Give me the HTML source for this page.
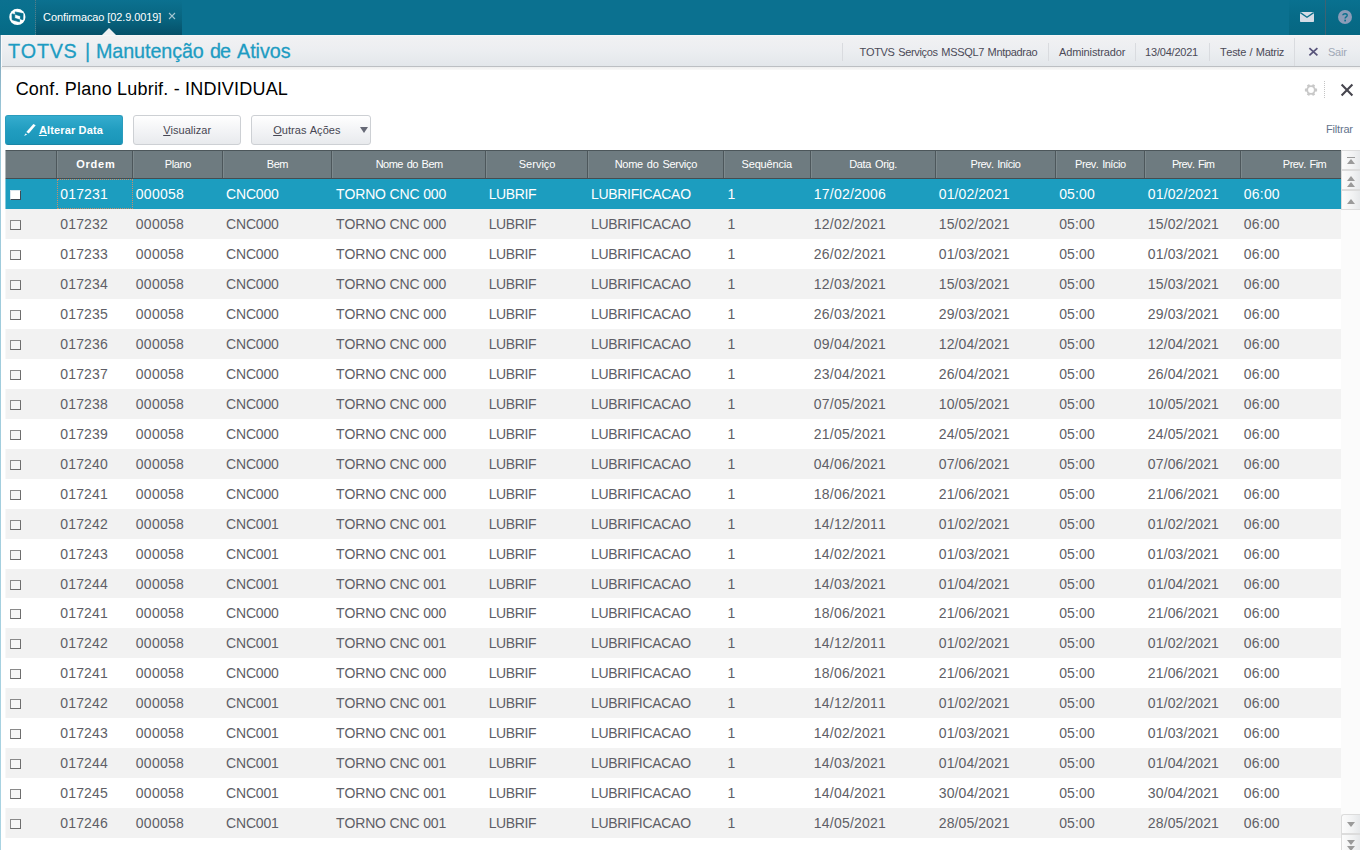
<!DOCTYPE html>
<html lang="pt-BR">
<head>
<meta charset="utf-8">
<title>TOTVS | Manutenção de Ativos</title>
<style>
*{box-sizing:border-box;margin:0;padding:0}
html,body{width:1360px;height:850px;overflow:hidden;background:#fff}
body{position:relative;font-family:"Liberation Sans",sans-serif;font-size:11px;color:#4a4a55;font-kerning:none}
.abs{position:absolute}
span,i,b,div,svg{position:absolute;white-space:nowrap;font-style:normal}
/* ---------- top bar ---------- */
#topbar{left:0;top:0;width:1360px;height:35px;background:#0b7190}
#logobg{left:0;top:0;width:35px;height:35px;background:linear-gradient(#0b7190,#08708d 40%,#066985)}
#logo{left:8px;top:8px;width:19px;height:19px}
#tabsep{left:35px;top:0;width:1px;height:35px;background:repeating-linear-gradient(#4f7f8c 0 1px,#1a6f88 1px 2px)}
#tab{left:36px;top:0;width:146px;height:35px;background:linear-gradient(#0b7190,#08647f 55%,#055069)}
#tabtxt{left:43px;top:11px;font-size:11px;line-height:13px;color:#fff;letter-spacing:-0.02px}
#tabx{left:168px;top:12px;width:8px;height:8px}
#notch{left:102px;top:28px;width:0;height:0;border-left:7px solid transparent;border-right:7px solid transparent;border-bottom:7px solid #eef0f3}
#rpanel{left:1289px;top:0;width:71px;height:35px;background:linear-gradient(#097190,#076b88 45%,#066782)}
#rdiv{left:1325px;top:0;width:1px;height:35px;background:#3d6373}
#mail{left:1300px;top:12px;width:14px;height:10px}
#help{left:1338px;top:10px;width:14px;height:14px}
/* ---------- header ---------- */
#hdr{left:0;top:35px;width:1360px;height:31px;background:linear-gradient(#fbfbfb 0,#f1f1f3 1px,#eceef1 50%,#e3e7eb)}
#hdrline{left:0;top:66px;width:1360px;height:1px;background:#bcbfc3}
#hdrshadow{left:0;top:67px;width:1360px;height:3px;background:linear-gradient(#eeeeee,#f9f9f9)}
#ledge{left:0;top:35px;width:1px;height:815px;background:linear-gradient(#7b9fb4,#9cc9da 80px,#a9d3e2)}
#ledge2{left:1px;top:35px;width:1px;height:32px;background:#fafbfc}
.title{top:39px;font-size:21px;line-height:24px;color:#1d9cc2;-webkit-text-stroke:0.3px #1d9cc2;transform:scaleX(.94);transform-origin:0 0}
.hsep{top:43px;width:1px;height:18px;background:#d9dbdf}
.hitem{top:46px;font-size:11px;line-height:13px;color:#4b4a57;word-spacing:0.8px}
/* ---------- section ---------- */
#sect{left:15px;top:79px;font-size:18px;line-height:21px;color:#000}
#gear{left:1304px;top:83px;width:14px;height:14px}
#dotsep{left:1324px;top:81px;width:1px;height:18px;background:repeating-linear-gradient(#c4c4c4 0 1px,#fff 1px 2px)}
#closex{left:1340px;top:83px;width:14px;height:14px}
/* ---------- buttons ---------- */
.btn{top:115px;height:30px;border-radius:3px;font-size:11px;line-height:13px}
#b1{left:5px;width:118px;background:linear-gradient(#35acce,#219dc0 50%,#1a95b8);border:1px solid #2a9cbd;border-bottom-color:#1a86a6}
#b1 span{left:34px;top:8px;color:#fff;font-weight:bold}
#pencil{left:23px;top:123px;width:14px;height:14px}
.btn2{background:linear-gradient(#ffffff,#f3f4f6 50%,#e8eaed);border:1px solid #cdd0d4}
.btn2 span{top:8px;color:#474652}
#b2{left:133px;width:108px}
#b3{left:251px;width:120px}
u{text-decoration:underline;text-underline-offset:1px}
#arrow{left:108px;top:11px;width:0;height:0;border-left:4px solid transparent;border-right:4px solid transparent;border-top:6px solid #666976}
#filtrar{left:1326px;top:123px;font-size:11px;line-height:13px;color:#64748d}
/* ---------- grid ---------- */
#ghead{left:5px;top:150px;width:1336px;height:29px;background:#6e7b80;border-top:1px solid #4c565a;border-bottom:1px solid #454d51;overflow:hidden}
.hc{top:0;height:27px;border-left:1px solid #4d575b;box-shadow:inset 1px 0 0 #7d898d;color:#fff;font-size:11px;line-height:27px;text-align:center}
.hc span{left:50%;top:0;transform:translateX(-50%);word-spacing:1.2px}
.hc.b{font-weight:bold;font-size:11px}
#grid{left:0;top:0;width:1360px;height:850px;pointer-events:none}
.row{left:5px;width:1336px;background:#fff;font-size:14px;color:#5e5e66;overflow:hidden}
.row.alt{background:#f2f2f2}
.row.sel{background:#1c9dbf;color:#fff}
.c{top:7px;line-height:16px}
.cb{left:5px;top:11px;width:11px;height:10px;background:#f7f7f7;border:1px solid #6d6d6d;border-top-color:#8a8a8a;border-left-color:#8a8a8a}
.row.sel .cb{background:#fff;border-color:#3f4a55;border-top-color:#d8e6ee;border-left-color:#d8e6ee}
.focus{left:52px;top:0;width:76px;height:30px;border:1px dotted #c98d6b}
/* ---------- scrollbar ---------- */
#sbar{left:1341px;top:150px;width:19px;height:700px;background:#fbfbfb}
.sb{left:0;width:19px;height:20px;background:linear-gradient(90deg,#fcfcfc,#f1f2f3 60%,#e6e8ea);border:1px solid #dcdcdc;border-right:0}
.tri-u{width:0;height:0;border-left:4px solid transparent;border-right:4px solid transparent;border-bottom:5px solid #9a9a9a;left:5px}
.tri-d{width:0;height:0;border-left:4px solid transparent;border-right:4px solid transparent;border-top:5px solid #9a9a9a;left:5px}
.bar{left:5px;width:8px;height:1px;background:#9a9a9a}

#gedge{left:5px;top:150px;width:1px;height:688px;background:rgba(255,255,255,.45)}

#tabtxt{letter-spacing:-0.104px;margin-left:0.11px}
#h1{letter-spacing:-0.319px;margin-left:0.54px}
#h2{letter-spacing:-0.135px;margin-left:0.07px}
#h3{letter-spacing:-0.21px;margin-left:-0.95px}
#h4{letter-spacing:-0.292px;margin-left:-0.1px}
#h5{letter-spacing:-0.225px;margin-left:-1.07px}
#sect{letter-spacing:0.198px;margin-left:0.64px}
#filtrar{letter-spacing:-0.165px;margin-left:-0.1px}
#b1t{letter-spacing:0.147px;margin-left:-1.14px}
#b2t{letter-spacing:0.031px;margin-left:0.17px}
#b3t{letter-spacing:0.061px;margin-left:0.18px}
#hc1{letter-spacing:0.789px;margin-left:1.34px}
#hc2{letter-spacing:-0.383px;margin-left:0.34px}
#hc3{letter-spacing:-0.449px;margin-left:0.42px}
#hc4{letter-spacing:-0.524px;margin-left:0.65px}
#hc5{letter-spacing:-0.001px;margin-left:0.61px}
#hc6{letter-spacing:-0.297px;margin-left:0.36px}
#hc7{letter-spacing:-0.182px;margin-left:-0.28px}
#hc8{letter-spacing:-0.36px;margin-left:0.12px}
#hc9{letter-spacing:-0.546px;margin-left:-0.05px}
#hc10{letter-spacing:-0.484px;margin-left:0.32px}
#hc11{letter-spacing:-0.66px;margin-left:0.6px}
#hc12{letter-spacing:-0.547px;margin-left:0.04px}
.row .c-ordem{letter-spacing:0.172px;margin-left:-0.27px}
.row .c-plano{letter-spacing:0.273px;margin-left:-0.7px}
.row .c-bem{letter-spacing:-0.178px;margin-left:-0.44px}
.row .c-nbem{letter-spacing:-0.163px;margin-left:0.12px}
.row .c-serv{letter-spacing:-0.392px;margin-left:-1.35px}
.row .c-nserv{letter-spacing:-0.306px;margin-left:-0.58px}
.row .c-seq{letter-spacing:0.0px;margin-left:-0.64px}
.row .c-dorig{letter-spacing:0.22px;margin-left:-0.66px}
.row .c-pini{letter-spacing:0.08px;margin-left:-0.16px}
.row .c-hini{letter-spacing:0.119px;margin-left:-0.34px}
.row .c-pfim{letter-spacing:0.11px;margin-left:-0.16px}
.row .c-hfim{letter-spacing:0.195px;margin-left:-0.16px}
#t1{letter-spacing:0.78px;margin-left:-0.61px}
#t2{letter-spacing:0.0px;margin-left:-0.12px}
#t3{letter-spacing:-0.103px;margin-left:-0.83px}
#t4{letter-spacing:-1.131px;margin-left:0.45px}
#t5{letter-spacing:-0.014px;margin-left:0.03px}
.c-ordem{left:55.5px}
.c-plano{left:131.5px}
.c-bem{left:221.5px}
.c-nbem{left:331px}
.c-serv{left:485px}
.c-nserv{left:586.5px}
.c-seq{left:723px}
.c-dorig{left:809.5px}
.c-pini{left:934px}
.c-hini{left:1054.5px}
.c-pfim{left:1143px}
.c-hfim{left:1239px}
</style>
</head>
<body>
<div id="topbar"></div>
<div id="logobg"></div>
<svg id="logo" viewBox="8 8 19 19"><circle cx="17.35" cy="16.95" r="8.1" fill="#fff"/><path d="M12 13.9 L14.75 14.45 L14.75 18.3 L19.7 19.7 L19.4 21.85 L12.15 19.75 Z M15.15 11.9 L23.1 13.6 L22.95 19.7 L20.4 19 L20.4 15.9 L15.45 14.45 Z" fill="#07708d" stroke="#07708d" stroke-width="0.7" stroke-linejoin="round"/></svg>
<div id="tabsep"></div>
<div id="tab"></div>
<span id="tabtxt">Confirmacao [02.9.0019]</span>
<svg id="tabx" viewBox="0 0 8 8"><path d="M1 1 L7 7 M7 1 L1 7" stroke="#a3c5d1" stroke-width="1.1" fill="none"/></svg>
<div id="notch"></div>
<div id="rpanel"></div>
<div id="rdiv"></div>
<svg id="mail" viewBox="0 0 14 10"><rect width="14" height="10" rx="0.8" fill="#d4dce6"/><path d="M0.3 0.6 L7 5.3 L13.7 0.6" fill="none" stroke="#08708c" stroke-width="1.3"/></svg>
<svg id="help" viewBox="0 0 14 14"><circle cx="7" cy="7" r="7" fill="#8b9cb8"/><path d="M4.9 5.3 C4.9 3.2 9.2 3.2 9.2 5.4 C9.2 6.9 7.1 6.9 7.1 8.6" fill="none" stroke="#0a6f8d" stroke-width="1.35"/><rect x="6.3" y="9.7" width="1.7" height="1.7" fill="#0a6f8d"/></svg>

<div id="hdr"></div>
<div id="hdrline"></div>
<div id="hdrshadow"></div>
<div id="ledge"></div>
<div id="ledge2"></div>
<span class="title" id="t1" style="left:9px">TOTVS</span><span class="title" id="t2" style="left:85px">|</span><span class="title" id="t3" style="left:97px">Manutenção</span><span class="title" id="t4" style="left:210px">de</span><span class="title" id="t5" style="left:237px">Ativos</span>
<i class="hsep" style="left:842px"></i>
<span class="hitem" id="h1" style="left:859px">TOTVS Serviços MSSQL7 Mntpadrao</span>
<i class="hsep" style="left:1048px"></i>
<span class="hitem" id="h2" style="left:1059px">Administrador</span>
<i class="hsep" style="left:1135px"></i>
<span class="hitem" id="h3" style="left:1146px">13/04/2021</span>
<i class="hsep" style="left:1209px"></i>
<span class="hitem" id="h4" style="left:1220px">Teste / Matriz</span>
<i class="hsep" style="left:1294px;top:38px;height:28px"></i>
<svg class="abs" style="left:1308px;top:47px;width:11px;height:10px" viewBox="1308 47 11 10"><path d="M1309.4 48.2 L1317.4 55.4 M1317.4 48.2 L1309.4 55.4" stroke="#57537a" stroke-width="1.75" fill="none"/></svg>
<span class="hitem" id="h5" style="left:1329px;color:#a0a8b6">Sair</span>

<span id="sect">Conf. Plano Lubrif. - INDIVIDUAL</span>
<svg id="gear" viewBox="0 0 14 14"><g fill="#c8c8c8" transform="rotate(30 7 7)"><circle cx="7" cy="7" r="4.7"/><rect x="5.6" y="0.9" width="2.8" height="12.2" rx="0.5"/><rect x="5.6" y="0.9" width="2.8" height="12.2" rx="0.5" transform="rotate(60 7 7)"/><rect x="5.6" y="0.9" width="2.8" height="12.2" rx="0.5" transform="rotate(120 7 7)"/></g><circle cx="7" cy="7" r="2.9" fill="#fff"/></svg>
<div id="dotsep"></div>
<svg id="closex" viewBox="0 0 14 14"><path d="M1.6 1.6 L12.4 12.4 M12.4 1.6 L1.6 12.4" stroke="#47464f" stroke-width="2.1" fill="none"/></svg>

<div class="btn" id="b1"><span id="b1t"><u>A</u>lterar Data</span></div>
<svg id="pencil" viewBox="23 123 14 14"><path d="M33.4 123.9 L35.7 125.3 L28.75 133.5 L26.3 132.1 Z" fill="#fff"/><path d="M25.3 133.4 L27.3 134.5 L24.2 136 Z" fill="#e8f4fa"/></svg>
<div class="btn btn2" id="b2"><span id="b2t" style="left:29px"><u>V</u>isualizar</span></div>
<div class="btn btn2" id="b3"><span id="b3t" style="left:21px"><u>O</u>utras Ações</span><i id="arrow"></i></div>
<span id="filtrar">Filtrar</span>

<div id="ghead">
<div class="hc" style="left:-1px;width:52px;border-left:0;box-shadow:none"></div>
<div class="hc b" style="left:51px;width:76px"><span id="hc1">Ordem</span></div>
<div class="hc" style="left:127px;width:90px"><span id="hc2">Plano</span></div>
<div class="hc" style="left:217px;width:109px"><span id="hc3">Bem</span></div>
<div class="hc" style="left:326px;width:154px"><span id="hc4">Nome do Bem</span></div>
<div class="hc" style="left:480px;width:102px"><span id="hc5">Serviço</span></div>
<div class="hc" style="left:582px;width:136px"><span id="hc6">Nome do Serviço</span></div>
<div class="hc" style="left:718px;width:87px"><span id="hc7">Sequência</span></div>
<div class="hc" style="left:805px;width:125px"><span id="hc8">Data Orig.</span></div>
<div class="hc" style="left:930px;width:120px"><span id="hc9">Prev. Início</span></div>
<div class="hc" style="left:1050px;width:89px"><span id="hc10">Prev. Início</span></div>
<div class="hc" style="left:1139px;width:96px"><span id="hc11">Prev. Fim</span></div>
<div class="hc" style="left:1235px;width:128px"><span id="hc12">Prev. Fim</span></div>
</div>

<div id="sbar">
<div class="sb" style="top:0"><i class="bar" style="top:6px"></i><i class="tri-u" style="top:8px"></i></div>
<div class="sb" style="top:20px"><i class="tri-u" style="top:5px"></i><i class="tri-u" style="top:11px"></i></div>
<div class="sb" style="top:40px;height:20px"><i class="tri-u" style="top:8px"></i></div>
<div class="sb" style="top:664px;border-radius:3px 0 0 0"><i class="tri-d" style="top:7px"></i></div>
<div class="sb" style="top:684px"><i class="tri-d" style="top:5px"></i><i class="tri-d" style="top:11px"></i></div>
</div>

<div id="grid">
<div class="row sel" style="top:179px;height:30px"><i class="cb"></i><i class="focus"></i><span class="c c-ordem">017231</span><span class="c c-plano">000058</span><span class="c c-bem">CNC000</span><span class="c c-nbem">TORNO CNC 000</span><span class="c c-serv">LUBRIF</span><span class="c c-nserv">LUBRIFICACAO</span><span class="c c-seq">1</span><span class="c c-dorig">17/02/2006</span><span class="c c-pini">01/02/2021</span><span class="c c-hini">05:00</span><span class="c c-pfim">01/02/2021</span><span class="c c-hfim">06:00</span></div>
<div class="row alt" style="top:209px;height:30px"><i class="cb"></i><span class="c c-ordem">017232</span><span class="c c-plano">000058</span><span class="c c-bem">CNC000</span><span class="c c-nbem">TORNO CNC 000</span><span class="c c-serv">LUBRIF</span><span class="c c-nserv">LUBRIFICACAO</span><span class="c c-seq">1</span><span class="c c-dorig">12/02/2021</span><span class="c c-pini">15/02/2021</span><span class="c c-hini">05:00</span><span class="c c-pfim">15/02/2021</span><span class="c c-hfim">06:00</span></div>
<div class="row" style="top:239px;height:30px"><i class="cb"></i><span class="c c-ordem">017233</span><span class="c c-plano">000058</span><span class="c c-bem">CNC000</span><span class="c c-nbem">TORNO CNC 000</span><span class="c c-serv">LUBRIF</span><span class="c c-nserv">LUBRIFICACAO</span><span class="c c-seq">1</span><span class="c c-dorig">26/02/2021</span><span class="c c-pini">01/03/2021</span><span class="c c-hini">05:00</span><span class="c c-pfim">01/03/2021</span><span class="c c-hfim">06:00</span></div>
<div class="row alt" style="top:269px;height:30px"><i class="cb"></i><span class="c c-ordem">017234</span><span class="c c-plano">000058</span><span class="c c-bem">CNC000</span><span class="c c-nbem">TORNO CNC 000</span><span class="c c-serv">LUBRIF</span><span class="c c-nserv">LUBRIFICACAO</span><span class="c c-seq">1</span><span class="c c-dorig">12/03/2021</span><span class="c c-pini">15/03/2021</span><span class="c c-hini">05:00</span><span class="c c-pfim">15/03/2021</span><span class="c c-hfim">06:00</span></div>
<div class="row" style="top:299px;height:30px"><i class="cb"></i><span class="c c-ordem">017235</span><span class="c c-plano">000058</span><span class="c c-bem">CNC000</span><span class="c c-nbem">TORNO CNC 000</span><span class="c c-serv">LUBRIF</span><span class="c c-nserv">LUBRIFICACAO</span><span class="c c-seq">1</span><span class="c c-dorig">26/03/2021</span><span class="c c-pini">29/03/2021</span><span class="c c-hini">05:00</span><span class="c c-pfim">29/03/2021</span><span class="c c-hfim">06:00</span></div>
<div class="row alt" style="top:329px;height:30px"><i class="cb"></i><span class="c c-ordem">017236</span><span class="c c-plano">000058</span><span class="c c-bem">CNC000</span><span class="c c-nbem">TORNO CNC 000</span><span class="c c-serv">LUBRIF</span><span class="c c-nserv">LUBRIFICACAO</span><span class="c c-seq">1</span><span class="c c-dorig">09/04/2021</span><span class="c c-pini">12/04/2021</span><span class="c c-hini">05:00</span><span class="c c-pfim">12/04/2021</span><span class="c c-hfim">06:00</span></div>
<div class="row" style="top:359px;height:30px"><i class="cb"></i><span class="c c-ordem">017237</span><span class="c c-plano">000058</span><span class="c c-bem">CNC000</span><span class="c c-nbem">TORNO CNC 000</span><span class="c c-serv">LUBRIF</span><span class="c c-nserv">LUBRIFICACAO</span><span class="c c-seq">1</span><span class="c c-dorig">23/04/2021</span><span class="c c-pini">26/04/2021</span><span class="c c-hini">05:00</span><span class="c c-pfim">26/04/2021</span><span class="c c-hfim">06:00</span></div>
<div class="row alt" style="top:389px;height:30px"><i class="cb"></i><span class="c c-ordem">017238</span><span class="c c-plano">000058</span><span class="c c-bem">CNC000</span><span class="c c-nbem">TORNO CNC 000</span><span class="c c-serv">LUBRIF</span><span class="c c-nserv">LUBRIFICACAO</span><span class="c c-seq">1</span><span class="c c-dorig">07/05/2021</span><span class="c c-pini">10/05/2021</span><span class="c c-hini">05:00</span><span class="c c-pfim">10/05/2021</span><span class="c c-hfim">06:00</span></div>
<div class="row" style="top:419px;height:30px"><i class="cb"></i><span class="c c-ordem">017239</span><span class="c c-plano">000058</span><span class="c c-bem">CNC000</span><span class="c c-nbem">TORNO CNC 000</span><span class="c c-serv">LUBRIF</span><span class="c c-nserv">LUBRIFICACAO</span><span class="c c-seq">1</span><span class="c c-dorig">21/05/2021</span><span class="c c-pini">24/05/2021</span><span class="c c-hini">05:00</span><span class="c c-pfim">24/05/2021</span><span class="c c-hfim">06:00</span></div>
<div class="row alt" style="top:449px;height:30px"><i class="cb"></i><span class="c c-ordem">017240</span><span class="c c-plano">000058</span><span class="c c-bem">CNC000</span><span class="c c-nbem">TORNO CNC 000</span><span class="c c-serv">LUBRIF</span><span class="c c-nserv">LUBRIFICACAO</span><span class="c c-seq">1</span><span class="c c-dorig">04/06/2021</span><span class="c c-pini">07/06/2021</span><span class="c c-hini">05:00</span><span class="c c-pfim">07/06/2021</span><span class="c c-hfim">06:00</span></div>
<div class="row" style="top:479px;height:30px"><i class="cb"></i><span class="c c-ordem">017241</span><span class="c c-plano">000058</span><span class="c c-bem">CNC000</span><span class="c c-nbem">TORNO CNC 000</span><span class="c c-serv">LUBRIF</span><span class="c c-nserv">LUBRIFICACAO</span><span class="c c-seq">1</span><span class="c c-dorig">18/06/2021</span><span class="c c-pini">21/06/2021</span><span class="c c-hini">05:00</span><span class="c c-pfim">21/06/2021</span><span class="c c-hfim">06:00</span></div>
<div class="row alt" style="top:509px;height:30px"><i class="cb"></i><span class="c c-ordem">017242</span><span class="c c-plano">000058</span><span class="c c-bem">CNC001</span><span class="c c-nbem">TORNO CNC 001</span><span class="c c-serv">LUBRIF</span><span class="c c-nserv">LUBRIFICACAO</span><span class="c c-seq">1</span><span class="c c-dorig">14/12/2011</span><span class="c c-pini">01/02/2021</span><span class="c c-hini">05:00</span><span class="c c-pfim">01/02/2021</span><span class="c c-hfim">06:00</span></div>
<div class="row" style="top:539px;height:30px"><i class="cb"></i><span class="c c-ordem">017243</span><span class="c c-plano">000058</span><span class="c c-bem">CNC001</span><span class="c c-nbem">TORNO CNC 001</span><span class="c c-serv">LUBRIF</span><span class="c c-nserv">LUBRIFICACAO</span><span class="c c-seq">1</span><span class="c c-dorig">14/02/2021</span><span class="c c-pini">01/03/2021</span><span class="c c-hini">05:00</span><span class="c c-pfim">01/03/2021</span><span class="c c-hfim">06:00</span></div>
<div class="row alt" style="top:569px;height:29px"><i class="cb"></i><span class="c c-ordem">017244</span><span class="c c-plano">000058</span><span class="c c-bem">CNC001</span><span class="c c-nbem">TORNO CNC 001</span><span class="c c-serv">LUBRIF</span><span class="c c-nserv">LUBRIFICACAO</span><span class="c c-seq">1</span><span class="c c-dorig">14/03/2021</span><span class="c c-pini">01/04/2021</span><span class="c c-hini">05:00</span><span class="c c-pfim">01/04/2021</span><span class="c c-hfim">06:00</span></div>
<div class="row" style="top:598px;height:30px"><i class="cb"></i><span class="c c-ordem">017241</span><span class="c c-plano">000058</span><span class="c c-bem">CNC000</span><span class="c c-nbem">TORNO CNC 000</span><span class="c c-serv">LUBRIF</span><span class="c c-nserv">LUBRIFICACAO</span><span class="c c-seq">1</span><span class="c c-dorig">18/06/2021</span><span class="c c-pini">21/06/2021</span><span class="c c-hini">05:00</span><span class="c c-pfim">21/06/2021</span><span class="c c-hfim">06:00</span></div>
<div class="row alt" style="top:628px;height:30px"><i class="cb"></i><span class="c c-ordem">017242</span><span class="c c-plano">000058</span><span class="c c-bem">CNC001</span><span class="c c-nbem">TORNO CNC 001</span><span class="c c-serv">LUBRIF</span><span class="c c-nserv">LUBRIFICACAO</span><span class="c c-seq">1</span><span class="c c-dorig">14/12/2011</span><span class="c c-pini">01/02/2021</span><span class="c c-hini">05:00</span><span class="c c-pfim">01/02/2021</span><span class="c c-hfim">06:00</span></div>
<div class="row" style="top:658px;height:30px"><i class="cb"></i><span class="c c-ordem">017241</span><span class="c c-plano">000058</span><span class="c c-bem">CNC000</span><span class="c c-nbem">TORNO CNC 000</span><span class="c c-serv">LUBRIF</span><span class="c c-nserv">LUBRIFICACAO</span><span class="c c-seq">1</span><span class="c c-dorig">18/06/2021</span><span class="c c-pini">21/06/2021</span><span class="c c-hini">05:00</span><span class="c c-pfim">21/06/2021</span><span class="c c-hfim">06:00</span></div>
<div class="row alt" style="top:688px;height:30px"><i class="cb"></i><span class="c c-ordem">017242</span><span class="c c-plano">000058</span><span class="c c-bem">CNC001</span><span class="c c-nbem">TORNO CNC 001</span><span class="c c-serv">LUBRIF</span><span class="c c-nserv">LUBRIFICACAO</span><span class="c c-seq">1</span><span class="c c-dorig">14/12/2011</span><span class="c c-pini">01/02/2021</span><span class="c c-hini">05:00</span><span class="c c-pfim">01/02/2021</span><span class="c c-hfim">06:00</span></div>
<div class="row" style="top:718px;height:30px"><i class="cb"></i><span class="c c-ordem">017243</span><span class="c c-plano">000058</span><span class="c c-bem">CNC001</span><span class="c c-nbem">TORNO CNC 001</span><span class="c c-serv">LUBRIF</span><span class="c c-nserv">LUBRIFICACAO</span><span class="c c-seq">1</span><span class="c c-dorig">14/02/2021</span><span class="c c-pini">01/03/2021</span><span class="c c-hini">05:00</span><span class="c c-pfim">01/03/2021</span><span class="c c-hfim">06:00</span></div>
<div class="row alt" style="top:748px;height:30px"><i class="cb"></i><span class="c c-ordem">017244</span><span class="c c-plano">000058</span><span class="c c-bem">CNC001</span><span class="c c-nbem">TORNO CNC 001</span><span class="c c-serv">LUBRIF</span><span class="c c-nserv">LUBRIFICACAO</span><span class="c c-seq">1</span><span class="c c-dorig">14/03/2021</span><span class="c c-pini">01/04/2021</span><span class="c c-hini">05:00</span><span class="c c-pfim">01/04/2021</span><span class="c c-hfim">06:00</span></div>
<div class="row" style="top:778px;height:30px"><i class="cb"></i><span class="c c-ordem">017245</span><span class="c c-plano">000058</span><span class="c c-bem">CNC001</span><span class="c c-nbem">TORNO CNC 001</span><span class="c c-serv">LUBRIF</span><span class="c c-nserv">LUBRIFICACAO</span><span class="c c-seq">1</span><span class="c c-dorig">14/04/2021</span><span class="c c-pini">30/04/2021</span><span class="c c-hini">05:00</span><span class="c c-pfim">30/04/2021</span><span class="c c-hfim">06:00</span></div>
<div class="row alt" style="top:808px;height:30px"><i class="cb"></i><span class="c c-ordem">017246</span><span class="c c-plano">000058</span><span class="c c-bem">CNC001</span><span class="c c-nbem">TORNO CNC 001</span><span class="c c-serv">LUBRIF</span><span class="c c-nserv">LUBRIFICACAO</span><span class="c c-seq">1</span><span class="c c-dorig">14/05/2021</span><span class="c c-pini">28/05/2021</span><span class="c c-hini">05:00</span><span class="c c-pfim">28/05/2021</span><span class="c c-hfim">06:00</span></div>
</div>
<div id="gedge"></div>
</body>
</html>
